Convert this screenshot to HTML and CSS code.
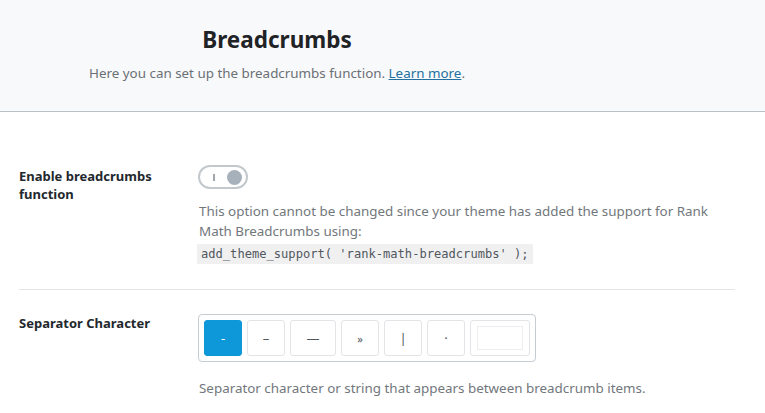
FILE: index.html
```html
<!DOCTYPE html>
<html>
<head>
<meta charset="utf-8">
<link rel="stylesheet" href="styles.css">
</head>
<body>
<header class="head">
  <div class="head-inner">
    <h1 class="title">Breadcrumbs</h1>
    <p class="subtitle">Here you can set up the breadcrumbs function. <a href="#" class="link">Learn more</a>.</p>
  </div>
</header>
<main class="content">
  <section class="row row-first">
    <div class="label">Enable breadcrumbs<br>function</div>
    <div class="field">
      <span class="toggle"><span class="toggle-i"></span><span class="toggle-knob"></span></span>
      <p class="desc desc-toggle">This option cannot be changed since your theme has added the support for Rank Math Breadcrumbs using:<br><code class="code">add_theme_support( 'rank-math-breadcrumbs' );</code></p>
    </div>
  </section>
  <section class="row row-second">
    <div class="label">Separator Character</div>
    <div class="field">
      <div class="sep-group">
        <span class="sep sep-active">-</span>
        <span class="sep">&ndash;</span>
        <span class="sep sep-wide">&mdash;</span>
        <span class="sep sep-small">&raquo;</span>
        <span class="sep">|</span>
        <span class="sep">&middot;</span>
        <span class="sep sep-custom"><span class="sep-input"></span></span>
      </div>
      <p class="desc desc-sep">Separator character or string that appears between breadcrumb items.</p>
    </div>
  </section>
</main>
</body>
</html>
```

FILE: styles.css
```css
* { box-sizing: border-box; }
html, body { margin: 0; padding: 0; background: #fff; }
body {
  font-family: "Noto Sans", "Open Sans", sans-serif;
  color: #23282d;
  width: 765px;
  height: 413px;
  overflow: hidden;
}
.head {
  background: #f8f9fb;
  border-bottom: 1px solid #b9c0c5;
  height: 112px;
}
.head-inner {
  width: 554px;
  text-align: center;
  padding-top: 24px;
}
.title {
  margin: 0;
  font-size: 22.5px;
  font-weight: 700;
  line-height: 32px;
  color: #1f2326;
}
.subtitle {
  margin: 7px 0 0;
  font-size: 13.4px;
  line-height: 20px;
  color: #6b7075;
}
.link { color: #2271a1; text-decoration: underline; }
.content { padding: 0 30px 0 19px; }
.row {
  display: flex;
  border-bottom: 1px solid #e5e5e5;
}
.row-first { padding-top: 55px; padding-bottom: 25px; }
.row-second { padding-top: 24px; border-bottom: none; }
.label {
  width: 179px;
  flex: none;
  font-size: 13px;
  font-weight: 700;
  line-height: 18px;
  color: #23282d;
}
.field { flex: 1; }
.toggle {
  position: relative;
  display: block;
  width: 50px;
  height: 24px;
  border: 2px solid #c3c8cc;
  border-radius: 12px;
  margin-top: -2px;
}
.toggle-i {
  position: absolute;
  left: 13px;
  top: 7px;
  width: 2px;
  height: 7px;
  background: #a0a6ab;
}
.toggle-knob {
  position: absolute;
  right: 4px;
  top: 2.5px;
  width: 15px;
  height: 15px;
  border-radius: 50%;
  background: #a7b1bb;
}
.desc {
  margin: 0;
  font-size: 13.4px;
  line-height: 20px;
  color: #72777c;
  padding-left: 1px;
}
.desc-toggle { margin-top: 12px; max-width: 530px; }
.code {
  display: inline-block;
  margin-top: 3px;
  margin-left: -2px;
  padding: 0 4px;
  height: 20px;
  background: #f0f0f1;
  font-family: "DejaVu Sans Mono", "Liberation Mono", monospace;
  font-size: 12.1px;
  line-height: 20px;
  color: #50575e;
  vertical-align: top;
}
.sep-group {
  display: inline-flex;
  gap: 5px;
  padding: 5px;
  border: 1px solid #c7ccd0;
  border-radius: 4px;
  width: 338px;
}
.sep {
  display: flex;
  align-items: center;
  justify-content: center;
  width: 38px;
  height: 36px;
  border: 1px solid #e2e4e7;
  border-radius: 3px;
  font-size: 13px;
  color: #50575e;
  background: #fff;
}
.sep-wide { width: 46px; }
.sep-small { font-size: 11px; }
.sep-active {
  background: #0e98da;
  border-color: #0e98da;
  color: #fff;
}
.sep-custom { width: 60px; padding: 5px 6px; }
.sep-input {
  display: block;
  width: 100%;
  height: 100%;
  border: 1px solid #eceef0;
}
.desc-sep { margin-top: 16px; }
```
